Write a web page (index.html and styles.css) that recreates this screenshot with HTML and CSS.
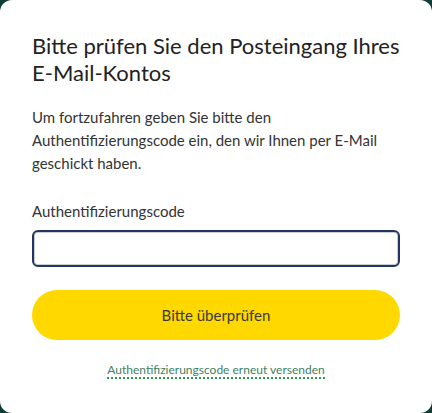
FILE: index.html
```html
<!DOCTYPE html>
<html lang="de">
<head>
  <meta charset="UTF-8" />
  <title>Posteingang prüfen</title>
  <meta name="viewport" content="width=device-width, initial-scale=1.0" />
  <link rel="stylesheet" href="styles.css">
</head>
<body>

  <div class="card">
    <h2>Bitte prüfen Sie den Posteingang Ihres E-Mail-Kontos</h2>

    <p class="intro">Um fortzufahren geben Sie bitte den Authentifizierungscode ein, den wir Ihnen per E-Mail geschickt haben.</p>

    <!-- CODE -->
    <form id="codeForm" novalidate>
      <label for="code">Authentifizierungscode</label>
      <input type="text" id="code" autocomplete="one-time-code" />

      <button type="submit">Bitte überprüfen</button>
    </form>

    <div class="resend">
      <a href="#">Authentifizierungscode erneut versenden</a>
    </div>
  </div>

</body>
</html>
```

FILE: styles.css
```css
html, body {
  margin: 0;
  height: 100%;
}

body {
  background: #0f3d37;
  font-family: Lato, "Open Sans", sans-serif;
  color: #2b2b2b;
}

.card {
  box-sizing: border-box;
  height: 100%;
  background: white;
  border-radius: 12px;
  padding: 32px 32px 0;
}

h2 {
  margin: 0;
  font-family: Lato, "Open Sans", sans-serif;
  font-weight: 400;
  font-size: 22px;
  line-height: 27px;
  color: #222;
}

.intro {
  margin: 20px 0 0;
  font-size: 15px;
  line-height: 23px;
  color: #333;
}

form {
  margin-top: 26px;
}

label {
  display: block;
  font-size: 15px;
  line-height: 20px;
  color: #333;
}

input {
  display: block;
  box-sizing: border-box;
  width: 100%;
  height: 37px;
  margin-top: 9px;
  padding: 0 10px;
  border: 2px solid #22375f;
  border-radius: 6px;
  box-shadow: inset 0 0 0 1px #c9cdd6;
  font: inherit;
}

button {
  display: block;
  width: 100%;
  height: 50px;
  margin-top: 23px;
  border: none;
  border-radius: 25px;
  background: #ffd800;
  color: #3a3a3a;
  font-family: inherit;
  font-size: 15px;
  cursor: pointer;
}

.resend {
  margin-top: 22px;
  text-align: center;
  font-size: 12px;
}

.resend a {
  color: #3f7f63;
  text-decoration: none;
  border-bottom: 2px dotted #2e9c4c;
}
```
